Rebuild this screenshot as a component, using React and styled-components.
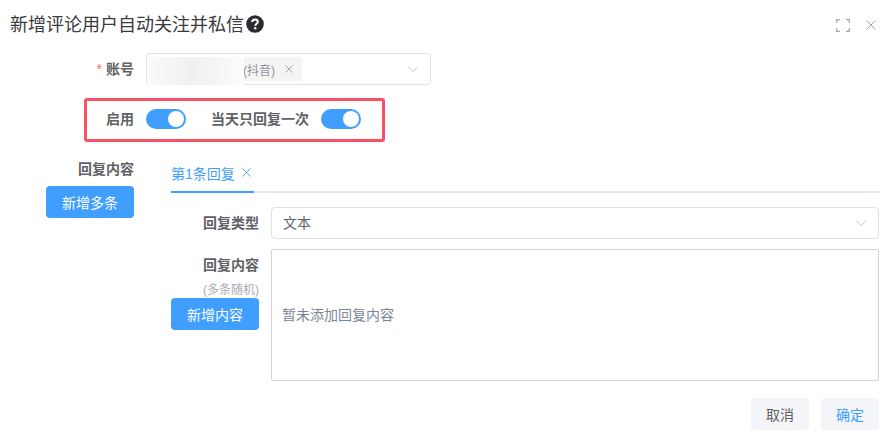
import React from 'react'
import styled, { createGlobalStyle } from 'styled-components'

const Global = createGlobalStyle`
  html, body { margin: 0; padding: 0; background: #fff; }
  body { font-family: 'Liberation Sans', 'Noto Sans CJK SC', sans-serif; }
  * { box-sizing: border-box; }
`

const Dialog = styled.div`
  width: 889px;
  height: 434px;
  padding: 14px 10px 0 10px;
  overflow: hidden;
  background: #fff;
`

const Header = styled.div`
  display: flex;
  align-items: center;
  height: 22px;
`

const Title = styled.div`
  font-size: 18px;
  line-height: 22px;
  color: #3a3b3e;
`

const HelpIcon = styled.svg`
  margin: -3px 0 0 2px;
`

const HeaderTools = styled.div`
  display: flex;
  align-items: center;
  gap: 16px;
  margin-left: auto;
  margin-right: 3px;
  color: #a3a6ad;
`

const FormRow = styled.div`
  display: flex;
  align-items: center;
  margin-top: ${(p) => p.$top || 0}px;
`

const Label = styled.div`
  width: ${(p) => p.$width || 124}px;
  flex: none;
  text-align: right;
  font-size: 14px;
  font-weight: 700;
  line-height: 20px;
  color: #606266;
`

const Star = styled.span`
  color: #f56c6c;
  font-weight: 400;
  margin-right: 4px;
`

const SelectBox = styled.div`
  position: relative;
  display: flex;
  align-items: center;
  flex: ${(p) => (p.$grow ? 1 : 'none')};
  width: ${(p) => (p.$grow ? 'auto' : '285px')};
  height: 32px;
  margin-left: 12px;
  padding: 0 11px ${(p) => (p.$grow ? 2 : 0)}px;
  border: 1px solid #dfe1ea;
  border-radius: 4px;
  font-size: 14px;
  color: #606266;
`

const Chevron = styled.svg`
  position: absolute;
  right: 11px;
  top: 9px;
  color: #bfc2c9;
`

const Tag = styled.div`
  display: flex;
  align-items: center;
  justify-content: flex-end;
  width: 153px;
  height: 24px;
  margin-left: -9px;
  padding-right: 9px;
  gap: 10px;
  border-radius: 4px;
  background: #f4f4f5;
  font-size: 12px;
  color: #909399;
`

/* the account name is blanked out in the screenshot */
const Blur = styled.div`
  position: absolute;
  left: 2px;
  top: 3px;
  width: 95px;
  height: 28px;
  background: linear-gradient(90deg, #fafafa 0%, #f0f0f0 45%, #f7f7f7 80%, #fdfdfd 100%);
`

const Highlight = styled.div`
  display: flex;
  align-items: center;
  width: 301px;
  height: 44px;
  margin: 13px 0 0 74px;
  padding: 0 0 2px 19px;
  border: 3px solid #fb5166;
  border-radius: 3px;
`

const SwitchLabel = styled.span`
  font-size: 14px;
  font-weight: 700;
  line-height: 20px;
  color: #606266;
  margin-right: 12px;
  margin-left: ${(p) => p.$left || 0}px;
`

const Switch = styled.div`
  position: relative;
  width: 40px;
  height: 20px;
  border-radius: 10px;
  background: #409eff;
  &::after {
    content: '';
    position: absolute;
    right: 2px;
    top: 2px;
    width: 16px;
    height: 16px;
    border-radius: 50%;
    background: #fff;
  }
`

const Body = styled.div`
  display: flex;
  margin-top: 17px;
`

const Side = styled.div`
  width: 124px;
  flex: none;
  display: flex;
  flex-direction: column;
  align-items: flex-end;
`

const SideLabel = styled(Label)`
  width: auto;
`

const Primary = styled.button`
  width: 88px;
  height: 32px;
  margin-top: ${(p) => p.$top || 0}px;
  padding: 0;
  border: 0;
  border-radius: 4px;
  background: #409eff;
  color: #fff;
  font-family: inherit;
  font-size: 14px;
`

const Main = styled.div`
  flex: 1;
  margin-left: 37px;
`

const Tabs = styled.div`
  display: flex;
  height: 34px;
  border-bottom: 2px solid #e4e7ed;
`

const Tab = styled.div`
  display: flex;
  align-items: center;
  gap: 7px;
  width: 83px;
  height: 34px;
  padding-bottom: 5px;
  border-bottom: 2px solid #409eff;
  font-size: 14px;
  color: #409eff;
`

const ContentRow = styled.div`
  display: flex;
  margin-top: 10px;
`

const ContentSide = styled.div`
  width: 88px;
  flex: none;
  display: flex;
  flex-direction: column;
  align-items: flex-end;
  padding-top: 6px;
`

const Hint = styled.div`
  margin-top: 8px;
  font-size: 12px;
  line-height: 15px;
  color: #a8abb2;
`

const TextBox = styled.div`
  flex: 1;
  display: flex;
  align-items: center;
  height: 132px;
  margin-left: 12px;
  padding: 0 10px 2px;
  border: 1px solid #d3d4d8;
  border-radius: 2px;
  font-size: 14px;
  color: #7a8599;
`

const Footer = styled.div`
  display: flex;
  justify-content: flex-end;
  gap: 12px;
  margin-top: 17px;
`

const Plain = styled.button`
  width: 58px;
  height: 32px;
  padding: 0;
  border: 0;
  border-radius: 4px;
  background: #f4f5f9;
  color: ${(p) => (p.$confirm ? '#409eff' : '#606266')};
  font-family: inherit;
  font-size: 14px;
`

const Cross = ({ size = 10, color = 'currentColor' }) => (
  <svg width={size} height={size} viewBox="0 0 10 10" fill="none" stroke={color} strokeWidth="1">
    <path d="M0.5 0.5 L9.5 9.5 M9.5 0.5 L0.5 9.5" />
  </svg>
)

const Arrow = () => (
  <Chevron width="12" height="12" viewBox="0 0 12 12" fill="none" stroke="currentColor" strokeWidth="1">
    <path d="M1 3.5 L6 8.5 L11 3.5" />
  </Chevron>
)

const Help = () => (
  <HelpIcon width="18" height="18" viewBox="0 0 18 18">
    <circle cx="9" cy="9" r="8.8" fill="#2b2d30" />
    <path d="M6.2 7 C6.2 5.4 7.5 4.5 9 4.5 C10.6 4.5 11.8 5.5 11.8 6.9 C11.8 8.6 9.2 8.8 9.2 10.7" fill="none" stroke="#fff" strokeWidth="2" />
    <circle cx="9.2" cy="13.2" r="1.2" fill="#fff" />
  </HelpIcon>
)

const Expand = () => (
  <svg width="14" height="13" viewBox="0 0 14 13" fill="none" stroke="currentColor" strokeWidth="1.3">
    <path d="M4 0.7 H0.7 V4 M10 0.7 H13.3 V4 M0.7 9 V12.3 H4 M13.3 9 V12.3 H10" />
  </svg>
)

export default function App() {
  return (
    <Dialog>
      <Global />
      <Header>
        <Title>新增评论用户自动关注并私信</Title>
        <Help />
        <HeaderTools>
          <Expand />
          <Cross size={10} />
        </HeaderTools>
      </Header>

      <FormRow $top={17}>
        <Label><Star>*</Star>账号</Label>
        <SelectBox>
          <Tag>
            <span>(抖音)</span>
            <Cross size={8} />
          </Tag>
          <Blur />
          <Arrow />
        </SelectBox>
      </FormRow>

      <Highlight>
        <SwitchLabel>启用</SwitchLabel>
        <Switch />
        <SwitchLabel $left={25}>当天只回复一次</SwitchLabel>
        <Switch />
      </Highlight>

      <Body>
        <Side>
          <SideLabel>回复内容</SideLabel>
          <Primary $top={7}>新增多条</Primary>
        </Side>
        <Main>
          <Tabs>
            <Tab>
              第1条回复
              <Cross size={9} />
            </Tab>
          </Tabs>
          <FormRow $top={14}>
            <Label $width={88}>回复类型</Label>
            <SelectBox $grow>
              文本
              <Arrow />
            </SelectBox>
          </FormRow>
          <ContentRow>
            <ContentSide>
              <Label $width={88}>回复内容</Label>
              <Hint>(多条随机)</Hint>
              <Primary $top={0}>新增内容</Primary>
            </ContentSide>
            <TextBox>暂未添加回复内容</TextBox>
          </ContentRow>
        </Main>
      </Body>

      <Footer>
        <Plain>取消</Plain>
        <Plain $confirm>确定</Plain>
      </Footer>
    </Dialog>
  )
}
